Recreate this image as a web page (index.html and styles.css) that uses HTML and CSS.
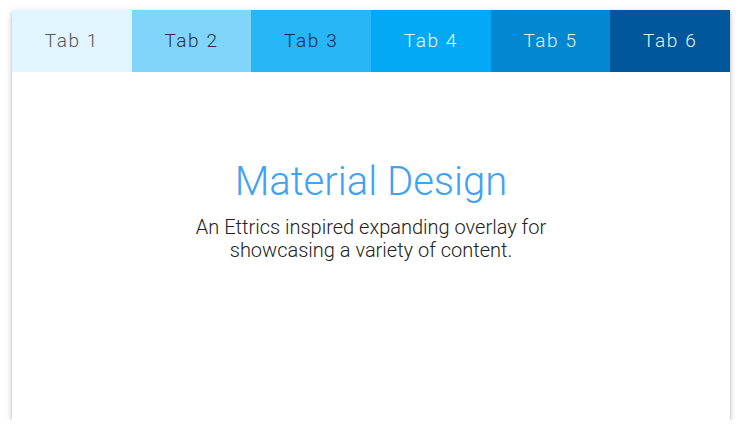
FILE: index.html
```html
<!DOCTYPE html>
<html>
<head>
<meta charset="utf-8">
<link rel="stylesheet" href="styles.css">
</head>
<body>
<div class="card">
  <div class="tabs">
    <div class="tab t1">Tab 1</div>
    <div class="tab t2">Tab 2</div>
    <div class="tab t3">Tab 3</div>
    <div class="tab t4">Tab 4</div>
    <div class="tab t5">Tab 5</div>
    <div class="tab t6">Tab 6</div>
  </div>
  <div class="content">
    <h1 class="title">Material Design</h1>
    <p class="sub">An Ettrics inspired expanding overlay for<br>showcasing a variety of content.</p>
  </div>
</div>
</body>
</html>
```
FILE: styles.css
```css
html, body { margin: 0; padding: 0; background: #fff; }
body { padding: 10px 12px 0 12px; font-family: Roboto, "Noto Sans", sans-serif; }
.card {
  width: 718px;
  height: 410px;
  background: #fff;
  display: flex;
  flex-direction: column;
  box-shadow: 0 4px 5px rgba(0,0,0,0.14), 0 1px 8px rgba(0,0,0,0.10), 0 2px 3px rgba(0,0,0,0.12);
}
.tabs { display: flex; height: 62px; }
.tab {
  flex: 1;
  display: flex;
  align-items: center;
  justify-content: center;
  font-weight: 300;
  font-size: 19px;
  letter-spacing: 1.6px;
  padding-bottom: 1px;
}
.t1 { background: #E1F5FE; color: #555; }
.t2 { background: #81D4FA; color: #263238; }
.t3 { background: #29B6F6; color: #0d2a4a; }
.t4 { background: #03A9F4; color: #f0f8ff; }
.t5 { background: #0288D1; color: #e3f2fd; }
.t6 { background: #01579B; color: #e3f2fd; }
.content {
  flex: 1;
  display: flex;
  flex-direction: column;
  align-items: center;
  padding-top: 86px;
}
.title {
  margin: 0;
  font-weight: 300;
  font-size: 40px;
  line-height: 48px;
  color: #3FA2F3;
}
.sub {
  margin: 10px 0 0 0;
  font-weight: 300;
  font-size: 20px;
  line-height: 23px;
  text-align: center;
  color: #222;
}
```
